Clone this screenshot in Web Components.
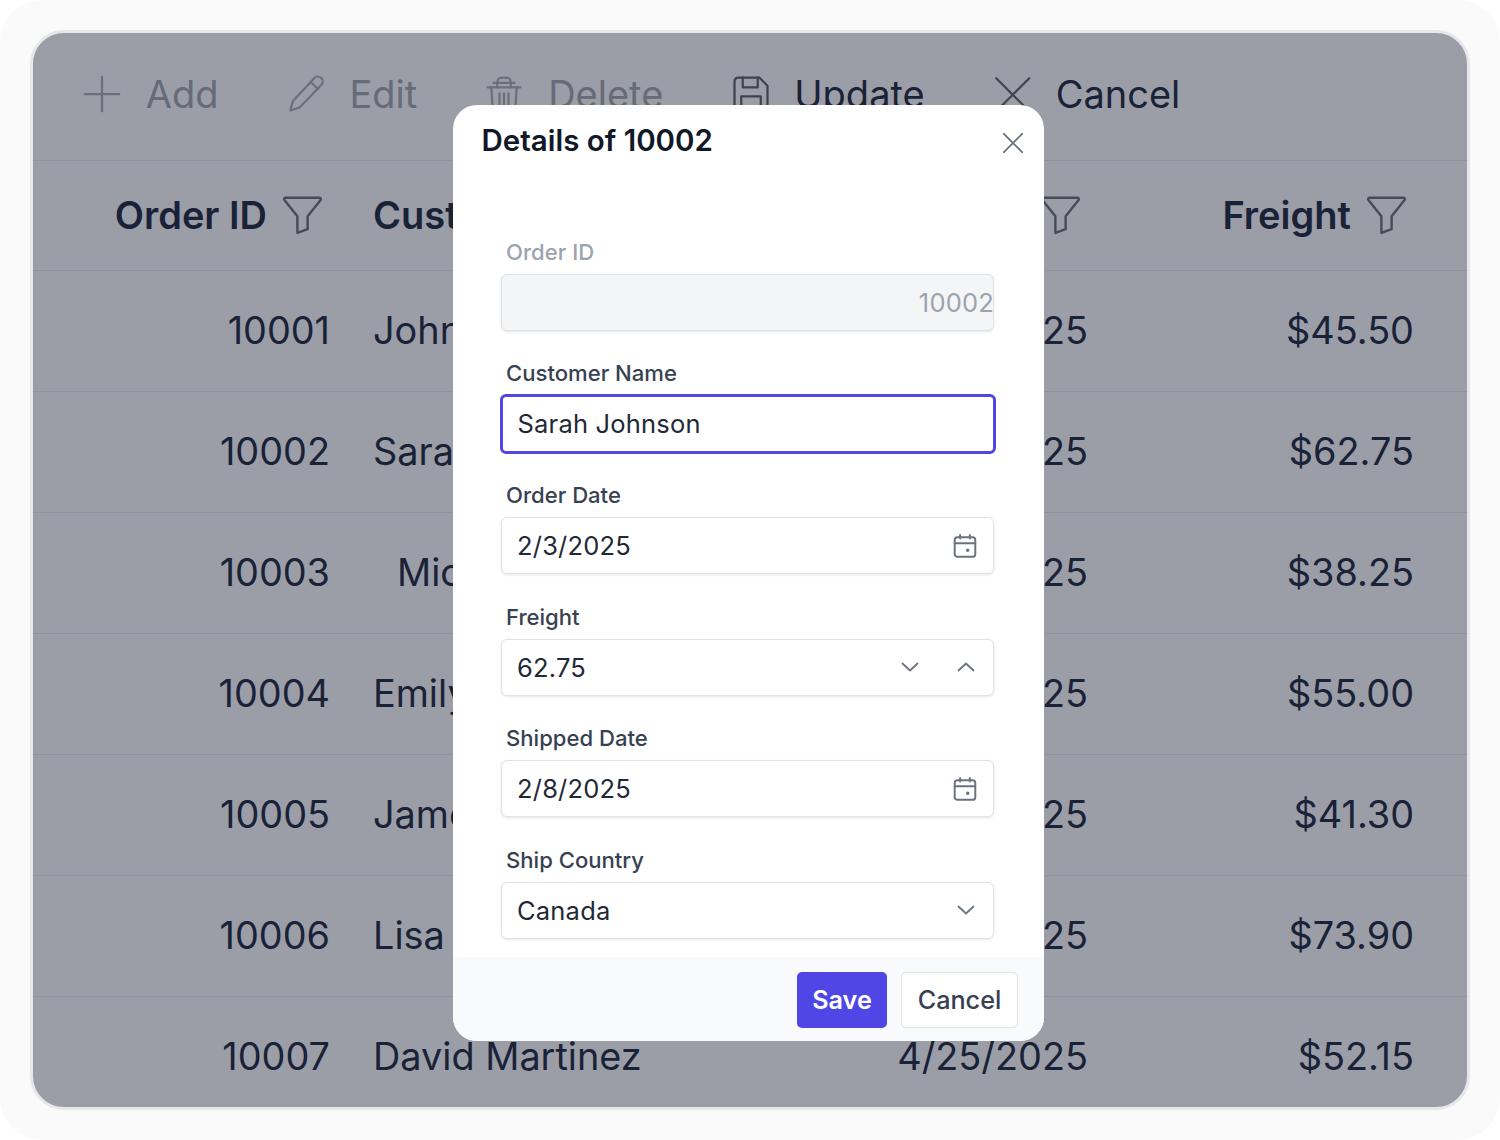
<!DOCTYPE html>
<html lang="en"><head><meta charset="utf-8"><title>Grid dialog edit</title>
<style>
html,body{margin:0;padding:0;background:#fff}
body{font-family:Inter,"Liberation Sans",sans-serif;width:1500px;height:1140px;overflow:hidden}
</style></head><body>
<edit-demo>
  <data-toolbar slot="grid"></data-toolbar>
  <data-grid slot="grid"></data-grid>
  <edit-dialog slot="dialog" heading="Details of 10002">
    <form-field label="Order ID" value="10002" disabled></form-field>
    <form-field label="Customer Name" value="Sarah Johnson" focused></form-field>
    <form-field label="Order Date" value="2/3/2025" icons="cal"></form-field>
    <form-field label="Freight" value="62.75" icons="spin"></form-field>
    <form-field label="Shipped Date" value="2/8/2025" icons="cal"></form-field>
    <form-field label="Ship Country" value="Canada" icons="down"></form-field>
  </edit-dialog>
</edit-demo>
<script>
const ICONS={
 plus:'<path d="M12 .5v23M.5 12h23"/>',
 pencil:'<path d="M17.500 1.500a3.200 3.200 0 0 1 4.800 4.300L7.800 21 1.500 23l1.800-6.300z"/><path d="M15 4l5 4.700"/>',
 trash:'<path d="M1 7.500h22"/><path d="M3.500 7.500l1 15.500h15l1-15.500"/><path d="M7.500 7.500V4a3 3 0 0 1 3-3h3a3 3 0 0 1 3 3v3.500"/><path d="M5 4.500h14"/><path d="M9 11.500v8M12 11.500v8M15 11.500v8"/>',
 save:'<path d="M3.500 1h14l5.500 5.500v14a2.500 2.500 0 0 1-2.500 2.500h-17A2.500 2.500 0 0 1 1 20.500v-17A2.500 2.500 0 0 1 3.500 1z"/><path d="M6.500 1v6.500h10V1"/><path d="M5.500 23v-9.500h13V23"/>',
 x:'<path d="M1.500 1.500l22 22M23.500 1.500l-22 22"/>',
 xs:'<path d="M.5 .5l23 23M23.500 .5l-23 23"/>',
 filter:'<path d="M2 2.200h20a.8.8 0 0 1 .6 1.300L15 13v7.600l-6 2.200V13L1.400 3.500a.8.8 0 0 1 .6-1.300z"/>'
};
const svg=(n,s,sw,c)=>`<svg width="${s}" height="${s}" viewBox="0 0 24 24" fill="none" stroke="${c}" stroke-width="${sw}" stroke-linecap="round" stroke-linejoin="round" aria-hidden="true">${ICONS[n]}</svg>`;

customElements.define('edit-demo',class extends HTMLElement{
 constructor(){super();this.attachShadow({mode:'open'}).innerHTML=`<style>
 :host{display:block;width:1500px;height:1140px;box-sizing:border-box;padding:30px;background:#fafafa;border-radius:42px}
 .card{position:relative;height:100%;box-sizing:border-box;border:3px solid #e5e7eb;border-radius:34px;background:#9b9ea7}
 .clip{height:100%;overflow:hidden;border-radius:31px}
 </style><div class="card"><div class="clip"><slot name="grid"></slot></div><slot name="dialog"></slot></div>`;}
});

customElements.define('data-toolbar',class extends HTMLElement{
 constructor(){super();
 const items=[['plus','Add',0],['pencil','Edit',0],['trash','Delete',0],['save','Update',1],['x','Cancel',1]];
 this.attachShadow({mode:'open'}).innerHTML=`<style>
 :host{display:flex;align-items:center;gap:69.300px;height:122px;padding:0 0 5px 51px;border-bottom:1.500px solid #8e929d;font-size:38px;line-height:1}
 .i{display:flex;align-items:center;gap:25.700px;color:#666b78}
 .i.on{color:#1a2238}
 svg{display:block;flex:none;overflow:visible}
 </style>`+items.map(([n,t,on])=>`<div class="i ${on?'on':''}">${svg(n,36,1.5,on?'#3d4350':'#6b707c')}<span>${t}</span></div>`).join('');}
});

customElements.define('data-grid',class extends HTMLElement{
 constructor(){super();
 const rows=[['10001','John Smith','1/15/2025','$45.50',0],['10002','Sarah Johnson','2/3/2025','$62.75',0],['10003','Michael Brown','3/10/2025','$38.25',24],['10004','Emily Davis','1/22/2025','$55.00',0],['10005','James Wilson','2/14/2025','$41.30',0],['10006','Lisa Anderson','3/5/2025','$73.90',0],['10007','David Martinez','4/25/2025','$52.15',0]];
 const f=svg('filter',41,1.4,'#454b58');
 this.attachShadow({mode:'open'}).innerHTML=`<style>
 :host{display:block;color:#1a2238;font-size:37.850px;line-height:1}
 .r{display:grid;grid-template-columns:297px 1fr 400px 326px;height:121.050px;box-sizing:border-box;border-bottom:1.500px solid #8e929d;align-items:center;padding:0 53px 0 0}
 .r.h{height:110px;font-weight:600;font-size:38px;padding-bottom:2px}
 .r:last-child{border-bottom:0;padding-bottom:2px}
 .a{text-align:right}
 .n{padding-left:43px;white-space:nowrap}
 .h .c{display:flex;align-items:center;justify-content:flex-end;gap:15px;padding-right:7px}
 .h .c.n{justify-content:flex-start;padding-right:0}
 svg{display:block;flex:none}
 </style>
 <div class="r h"><div class="c">Order ID${f}</div><div class="c n">Customer Name</div><div class="c">Order Date${f}</div><div class="c">Freight${f}</div></div>`+
 rows.map(r=>`<div class="r"><div class="a">${r[0]}</div><div class="n"${r[4]?` style="padding-left:${43+r[4]}px"`:''}>${r[1]}</div><div class="a">${r[2]}</div><div class="a">${r[3]}</div></div>`).join('');}
});

customElements.define('edit-dialog',class extends HTMLElement{
 constructor(){super();this.attachShadow({mode:'open'}).innerHTML=`<style>
 :host{position:absolute;left:420px;top:72px;width:591px;height:936px;background:#fff;border-radius:24px;display:flex;flex-direction:column;overflow:hidden;color:#111827}
 header{display:flex;justify-content:space-between;align-items:center;height:70px;padding:1px 21px 0 28.500px;box-sizing:border-box;flex:none}
 h2{margin:0;font-size:29.500px;font-weight:600;line-height:1;color:#111827}
 header svg{display:block;margin-top:4px}
 .body{flex:1;display:flex;flex-direction:column;gap:24.600px;padding:58.900px 50px 0 48px}
 footer{flex:none;height:84px;background:#f9fafb;display:flex;justify-content:flex-end;align-items:center;gap:14px;padding:1px 26px 0;box-sizing:border-box}
 button{font:inherit;font-size:25.200px;height:56px;border-radius:5px;padding:0;box-sizing:border-box;cursor:pointer}
 .s{width:90px;background:#4f46e5;border:0;color:#fff;font-weight:600}
 .c{width:117px;background:#fff;border:1.500px solid #dfe2e6;color:#374151;font-weight:500}
 </style><header><h2></h2>${svg('xs',20,2.200,'#6b7280')}</header><div class="body"><slot></slot></div><footer><button class="s">Save</button><button class="c">Cancel</button></footer>`;
 this.shadowRoot.querySelector('h2').textContent=this.getAttribute('heading');}
});

customElements.define('form-field',class extends HTMLElement{
 constructor(){super();
 const d=this.hasAttribute('disabled'),fo=this.hasAttribute('focused'),ic=this.getAttribute('icons')||'';
 const st='fill="none" stroke="#6b7280" stroke-width="1.800" stroke-linecap="round" stroke-linejoin="round" aria-hidden="true"';
 const cal=`<svg width="26" height="26" viewBox="0 0 24 24" ${st}><rect x="2.500" y="4" width="19" height="18" rx="2.500"/><path d="M2.500 9.500h19M7.500 1.800V5M16.500 1.800V5"/><circle cx="14.500" cy="16" r=".7" fill="#6b7280"/></svg>`;
 const down=`<svg width="24" height="24" viewBox="0 0 24 24" ${st}><path d="M4.500 8.500l7.500 7 7.500-7"/></svg>`;
 const up=`<svg width="24" height="24" viewBox="0 0 24 24" ${st}><path d="M4.500 15.500l7.500-7 7.500 7"/></svg>`;
 const icons={cal,down,spin:down+up}[ic]||'';
 this.attachShadow({mode:'open'}).innerHTML=`<style>
 :host{display:block}
 label{display:block;height:36px;line-height:36px;margin-bottom:4px;padding-left:5px;font-size:22.100px;font-weight:500;color:${d?'#9ca3af':'#374151'}}
 .box{display:flex;align-items:center;height:57px;box-sizing:border-box;border:1.500px solid #dfe2e6;border-radius:6px;background:${d?'#f3f5f7':'#fff'};box-shadow:0 1px 3px rgba(0,0,0,.1);padding:0 15px;font-size:25.500px;letter-spacing:.2px;color:${d?'#9ca3af':'#1f2937'}}
 .box.d{justify-content:flex-end;padding-right:0}
 .box.f{border:3px solid #4f46e5;margin:-1.500px -1.500px;height:60px;box-shadow:none;padding:0 15px}
 .v{flex:1}.d .v{text-align:right;margin-right:-1px}
 .ic{display:flex;gap:32px;align-items:center;margin-right:0}
 svg{display:block}
 </style><label></label><div class="box ${d?'d':''} ${fo?'f':''}"><span class="v"></span><span class="ic">${icons}</span></div>`;
 this.shadowRoot.querySelector('label').textContent=this.getAttribute('label');
 this.shadowRoot.querySelector('.v').textContent=this.getAttribute('value');}
});
</script>
</body></html>
